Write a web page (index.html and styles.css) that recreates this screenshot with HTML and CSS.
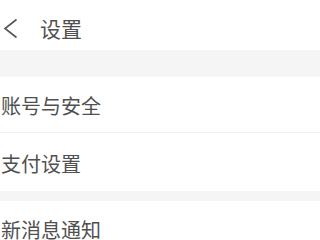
FILE: index.html
```html
<!DOCTYPE html>
<html lang="zh-CN">
<head>
<meta charset="utf-8">
<title>设置</title>
<link rel="stylesheet" href="styles.css">
</head>
<body>
<div class="page">
  <header class="topbar">
    <svg class="back" width="16" height="22" viewBox="0 0 16 22" aria-hidden="true">
      <polyline points="13.5,1.5 2,10.5 13.5,19.5" fill="none" stroke="#555" stroke-width="1.6" stroke-linejoin="miter"/>
    </svg>
    <span class="title">设置</span>
  </header>
  <div class="gap gap-lg"></div>
  <div class="row row-first">账号与安全</div>
  <div class="row row-second">支付设置</div>
  <div class="gap gap-sm"></div>
  <div class="row row-last">新消息通知</div>
</div>
</body>
</html>
```
FILE: styles.css
```css
html, body {
  margin: 0;
  padding: 0;
  background: #ffffff;
}
body {
  font-family: "Noto Sans CJK SC", "Noto Sans", sans-serif;
  color: #505050;
  width: 320px;
  height: 240px;
  overflow: hidden;
}
.page {
  display: flex;
  flex-direction: column;
}
.topbar {
  height: 50px;
  display: flex;
  align-items: center;
  padding-left: 3px;
  box-sizing: border-box;
}
.back {
  display: block;
  margin-top: 8px;
}
.title {
  font-size: 21px;
  margin-left: 21px;
  margin-top: 6px;
  line-height: 1;
}
.gap {
  background: #f5f5f5;
}
.gap-lg {
  height: 27px;
}
.gap-sm {
  height: 10px;
}
.row {
  font-size: 20px;
  line-height: 1;
  padding-left: 1px;
  display: flex;
  align-items: center;
  box-sizing: border-box;
}
.row-first {
  height: 56px;
  border-bottom: 1px solid #f1f1f1;
  padding-top: 2px;
}
.row-second {
  height: 58px;
  padding-top: 4px;
}
.row-last {
  height: 39px;
  align-items: flex-end;
  padding-bottom: 0;
}
```
